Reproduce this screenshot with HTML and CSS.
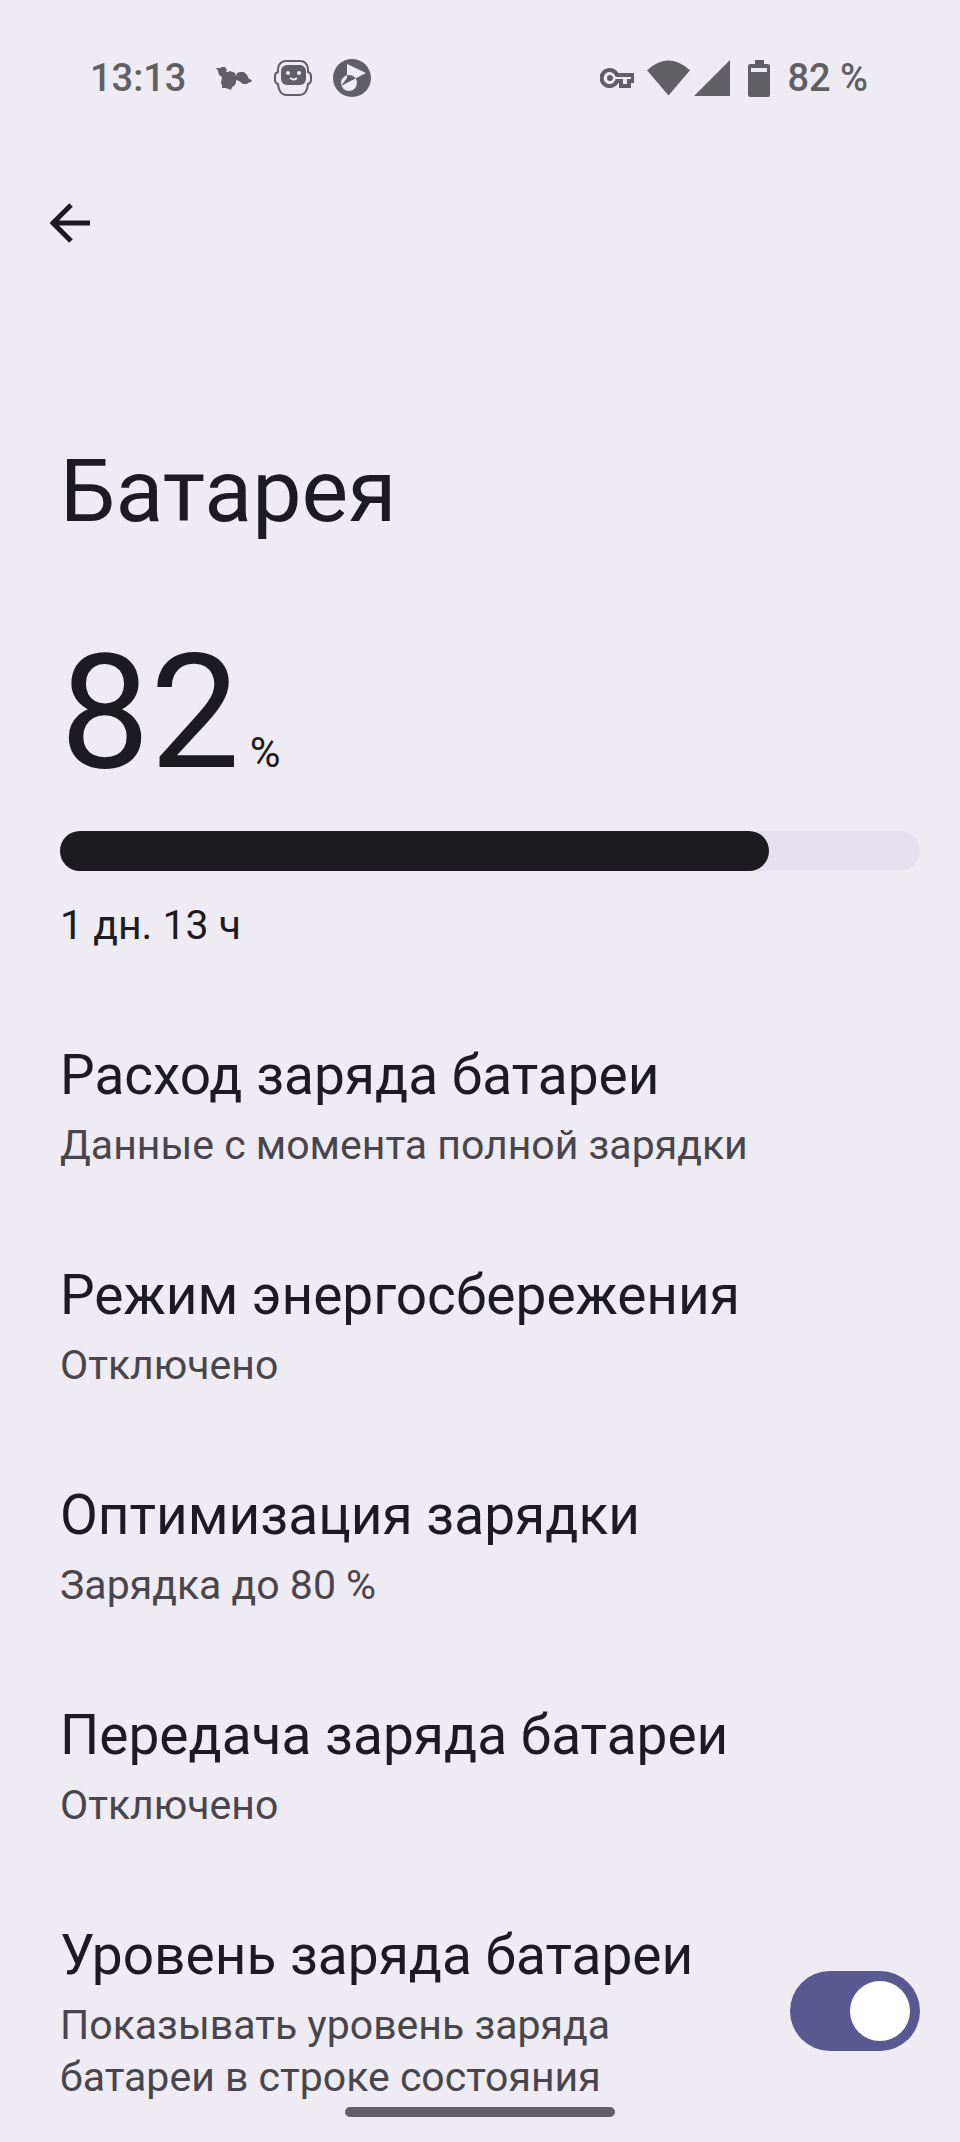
FILE: index.html
```
<!DOCTYPE html>
<html lang="ru">
<head>
  <meta charset="UTF-8" />
  <meta name="viewport" content="width=device-width, initial-scale=1" />
  <title>Батарея</title>
  <link rel="stylesheet" href="styles.css">
</head>
<body>
  <!-- Status bar -->
  <header class="status-bar">
    <div class="status-left">
      <span class="clock">13:13</span>
      <svg class="app-icon" viewBox="0 0 38 38" aria-hidden="true">
        <path d="M1 9l4 0 2-1h3l2 3-1 2 2 0 2-1 3 1 2 1 1 3 1-3 3-1 4 0 3 3 2 4 3 1-1 2-3 1-1 1-4 0-4-3-3-1 0 3-2 3-2 1-1 3-2-1-4-1-3 0 0-3-1-2 1-6-3-2-1-4z" />
      </svg>
      <svg class="app-icon" viewBox="0 0 38 38" aria-hidden="true">
        <path class="line" d="M12 2h14q7 0 8 8v3q3 1 3 4v4q0 3-3 4-1 11-9 11H13q-8 0-9-11-3-1-3-4v-4q0-3 3-4v-3q1-8 8-8z" />
        <rect x="7" y="6" width="25" height="20" rx="6" />
        <circle class="hole" cx="14" cy="14" r="2" />
        <circle class="hole" cx="25" cy="14" r="2" />
        <path class="hole-line" d="M16 19q4 3 7 0" />
      </svg>
      <svg class="app-icon" viewBox="0 0 38 38" aria-hidden="true">
        <circle cx="19" cy="19" r="19" />
        <path class="hole" fill-rule="evenodd" d="M14 5l19 9L8 27l6-8zM16 16a8 8 0 1 1 0 16 8 8 0 1 1 0-16z" />
      </svg>
    </div>
    <div class="status-right">
      <svg class="vpn-icon" viewBox="0 0 34 20" aria-hidden="true">
        <path d="M17 7a8 8 0 1 0 0 6h4v5h8v-5h4V7z" />
        <circle class="dot" cx="10" cy="10" r="3" />
      </svg>
      <svg class="wifi-icon" viewBox="0 0 44 36" aria-hidden="true">
        <path d="M0 10Q22-10 44 10L22 36z" />
      </svg>
      <svg class="signal-icon" viewBox="0 0 36 36" aria-hidden="true">
        <path d="M36 0v36H0z" />
      </svg>
      <svg class="battery-icon" viewBox="0 0 22 37" aria-hidden="true">
        <path fill-rule="evenodd" d="M7 0h9v4h4q2 0 2 2v29q0 2-2 2H2q-2 0-2-2V6q0-2 2-2h5zM3 8v4h16V8z" />
      </svg>
      <span class="charge">82 %</span>
    </div>
  </header>

  <main class="page">
    <button class="back-btn" type="button" aria-label="Назад">
      <svg viewBox="0 0 40 40" aria-hidden="true">
        <path d="M40 20H3M21 2L3 20l18 18" />
      </svg>
    </button>

    <h1 class="page-title">Батарея</h1>

    <!-- Battery level -->
    <section class="level">
      <p class="level-value">82<span class="level-unit">%</span></p>
      <div class="level-track" role="progressbar" aria-label="Заряд батареи" aria-valuenow="82" aria-valuemin="0" aria-valuemax="100">
        <div class="level-fill" style="width: 82.4%"></div>
      </div>
      <p class="level-time">1 дн. 13 ч</p>
    </section>

    <nav class="settings">
      <a class="item" href="#usage">
        <span class="item-title">Расход заряда батареи</span>
        <span class="item-text">Данные с момента полной зарядки</span>
      </a>
      <a class="item" href="#saver">
        <span class="item-title">Режим энергосбережения</span>
        <span class="item-text">Отключено</span>
      </a>
      <a class="item" href="#charging">
        <span class="item-title">Оптимизация зарядки</span>
        <span class="item-text">Зарядка до 80 %</span>
      </a>
      <a class="item" href="#share">
        <span class="item-title">Передача заряда батареи</span>
        <span class="item-text">Отключено</span>
      </a>
      <div class="item item-switch">
        <label class="item-label" for="percent">
          <span class="item-title">Уровень заряда батареи</span>
          <span class="item-text">Показывать уровень заряда батареи в строке состояния</span>
        </label>
        <input class="switch" type="checkbox" role="switch" id="percent" checked />
      </div>
    </nav>
  </main>

  <div class="nav-handle"></div>
</body>
</html>
```
FILE: styles.css
```
* {
  box-sizing: border-box;
}

body {
  margin: 0;
  min-height: 100vh;
  background: #eeebf3;
  color: #1c1b20;
  font-family: Roboto, "Noto Sans", sans-serif;
}

h1, p {
  margin: 0;
  font-weight: 400;
}

/* Status bar */
.status-bar {
  display: flex;
  justify-content: space-between;
  align-items: center;
  height: 156px;
  padding: 0 92px 0 90px;
  color: #605f64;
  font-size: 38px;
  font-weight: 500;
}

.status-left,
.status-right {
  display: flex;
  align-items: center;
}

.status-left {
  gap: 21px;
}

.clock {
  margin-right: 8px;
}

.status-bar svg {
  fill: #605f64;
}

.app-icon {
  width: 38px;
  height: 38px;
}

.status-bar .line {
  fill: none;
  stroke: #605f64;
  stroke-width: 2;
}

.status-bar .hole {
  fill: #eeebf3;
}

.status-bar .hole-line {
  fill: none;
  stroke: #eeebf3;
  stroke-width: 2;
}

.status-bar .vpn-icon {
  width: 34px;
  height: 20px;
  margin-right: 13px;
  fill: none;
  stroke: #605f64;
  stroke-width: 4;
}

.status-bar .dot {
  fill: #605f64;
  stroke: none;
}

.wifi-icon {
  width: 43px;
  height: 36px;
  margin-right: 4px;
}

.signal-icon {
  width: 36px;
  height: 36px;
  margin-right: 18px;
}

.battery-icon {
  width: 22px;
  height: 37px;
  margin-right: 17px;
}

/* Page */
.page {
  padding: 0 40px 0 60px;
}

.back-btn {
  display: block;
  width: 60px;
  height: 60px;
  margin: 37px 0 0 -20px;
  padding: 10px;
  border: none;
  background: none;
  cursor: pointer;
}

.back-btn svg {
  display: block;
  width: 40px;
  height: 40px;
  fill: none;
  stroke: #1c1b20;
  stroke-width: 5;
}

.page-title {
  margin-top: 182px;
  font-size: 88px;
  line-height: 112px;
}

/* Battery level */
.level-value {
  margin-top: 72px;
  font-size: 160px;
  line-height: 188px;
}

.level-unit {
  margin-left: 10px;
  font-size: 42px;
  line-height: 1;
}

.level-track {
  height: 40px;
  margin-top: 24px;
  border-radius: 20px;
  background: #e4e1ec;
}

.level-fill {
  height: 100%;
  border-radius: 20px;
  background: #1c1b20;
}

.level-time {
  margin-top: 28px;
  font-size: 41px;
  line-height: 52px;
}

/* Settings list */
.settings {
  margin-top: 44px;
}

.item {
  display: block;
  padding: 44px 0;
  color: inherit;
  text-decoration: none;
}

.item-title,
.item-text {
  display: block;
}

.item-title {
  font-size: 55px;
  line-height: 72px;
}

.item-text {
  margin-top: 8px;
  color: #48464c;
  font-size: 41px;
  line-height: 52px;
}

.item-switch {
  display: flex;
  justify-content: space-between;
  align-items: center;
  gap: 90px;
  padding-bottom: 36px;
}

.item-label {
  flex: 1;
}

.switch {
  appearance: none;
  flex: none;
  width: 130px;
  height: 80px;
  margin: 0;
  padding: 10px;
  border-radius: 40px;
  background: #c8c5d0;
  cursor: pointer;
}

.switch::before {
  content: "";
  display: block;
  width: 60px;
  height: 60px;
  border-radius: 50%;
  background: #fff;
}

.switch:checked {
  background: #5a5891;
}

.switch:checked::before {
  margin-left: auto;
}

/* Gesture bar lies over the list */
.nav-handle {
  position: fixed;
  bottom: 25px;
  left: 50%;
  width: 270px;
  height: 10px;
  border-radius: 5px;
  background: #605f64;
  transform: translateX(-50%);
}
```
